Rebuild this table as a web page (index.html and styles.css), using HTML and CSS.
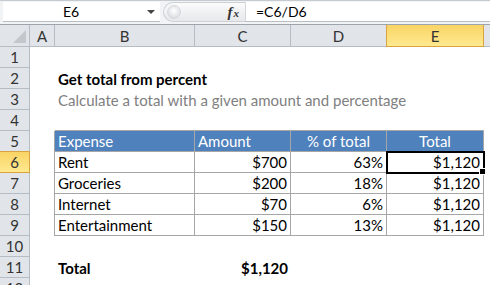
FILE: index.html
```html
<!DOCTYPE html>
<html>

<head>
    <title>Get total from percent</title>
    <link rel="stylesheet" href="styles.css">
</head>

<body>
    <div class="formula-bar">
        <div class="name-box">
            <span class="cell-ref">E6</span>
            <span class="drop"></span>
        </div>
        <div class="fx-box">
            <span class="knob"></span>
            <span class="fx"><i>f</i><i class="x">x</i></span>
        </div>
        <div class="formula">=C6/D6</div>
    </div>

    <div class="sheet">
        <div class="row head">
            <div class="corner"><span class="tri"></span></div>
            <div class="col-h">A</div>
            <div class="col-h">B</div>
            <div class="col-h">C</div>
            <div class="col-h">D</div>
            <div class="col-h active">E</div>
            <div class="col-h last"></div>
        </div>

        <div class="row">
            <div class="row-h">1</div>
            <div class="c"></div><div class="c"></div><div class="c"></div><div class="c"></div><div class="c"></div><div class="c"></div>
        </div>
        <div class="row">
            <div class="row-h">2</div>
            <div class="c"></div>
            <div class="c title">Get total from percent</div>
            <div class="c"></div><div class="c"></div><div class="c"></div><div class="c"></div>
        </div>
        <div class="row">
            <div class="row-h">3</div>
            <div class="c"></div>
            <div class="c subtitle">Calculate a total with a given amount and percentage</div>
            <div class="c"></div><div class="c"></div><div class="c"></div><div class="c"></div>
        </div>
        <div class="row">
            <div class="row-h">4</div>
            <div class="c"></div>
            <div class="c top"></div><div class="c top"></div><div class="c top"></div><div class="c top"></div>
            <div class="c"></div>
        </div>

        <div class="row">
            <div class="row-h">5</div>
            <div class="c edge"></div>
            <div class="c t th">Expense</div>
            <div class="c t th">Amount</div>
            <div class="c t th mid">% of total</div>
            <div class="c t th mid">Total</div>
            <div class="c"></div>
        </div>
        <div class="row">
            <div class="row-h active">6</div>
            <div class="c edge"></div>
            <div class="c t">Rent</div>
            <div class="c t num">$700</div>
            <div class="c t num">63%</div>
            <div class="c t num selected">$1,120<span class="handle"></span></div>
            <div class="c"></div>
        </div>
        <div class="row">
            <div class="row-h">7</div>
            <div class="c edge"></div>
            <div class="c t">Groceries</div>
            <div class="c t num">$200</div>
            <div class="c t num">18%</div>
            <div class="c t num">$1,120</div>
            <div class="c"></div>
        </div>
        <div class="row">
            <div class="row-h">8</div>
            <div class="c edge"></div>
            <div class="c t">Internet</div>
            <div class="c t num">$70</div>
            <div class="c t num">6%</div>
            <div class="c t num">$1,120</div>
            <div class="c"></div>
        </div>
        <div class="row">
            <div class="row-h">9</div>
            <div class="c edge"></div>
            <div class="c t">Entertainment</div>
            <div class="c t num">$150</div>
            <div class="c t num">13%</div>
            <div class="c t num">$1,120</div>
            <div class="c"></div>
        </div>

        <div class="row">
            <div class="row-h">10</div>
            <div class="c"></div><div class="c"></div><div class="c"></div><div class="c"></div><div class="c"></div><div class="c"></div>
        </div>
        <div class="row">
            <div class="row-h">11</div>
            <div class="c"></div>
            <div class="c bold">Total</div>
            <div class="c num bold">$1,120</div>
            <div class="c"></div><div class="c"></div><div class="c"></div>
        </div>
        <div class="row">
            <div class="row-h">12</div>
            <div class="c"></div><div class="c"></div><div class="c"></div><div class="c"></div><div class="c"></div><div class="c"></div>
        </div>
    </div>
</body>

</html>
```

FILE: styles.css
```css
body {
    margin: 0;
    font-family: Lato, "Open Sans", sans-serif;
    font-size: 15px;
    color: #000;
    background: #fff;
    overflow: hidden;
}

/* formula bar */

.formula-bar {
    display: flex;
    height: 24px;
    box-sizing: border-box;
    background: #f2f3f5;
    border-top: 1px solid #c6cbd1;
    padding-top: 1px;
}

.name-box {
    width: 157px;
    height: 20px;
    margin-left: 3px;
    box-sizing: border-box;
    background: #fff;
    border-bottom: 1px solid #b9bec5;
    display: flex;
    align-items: center;
    position: relative;
}

.cell-ref {
    flex: 1;
    text-align: center;
    font-size: 14px;
    padding-right: 8px;
}

.drop {
    width: 0;
    height: 0;
    border-left: 4px solid transparent;
    border-right: 4px solid transparent;
    border-top: 4px solid #444;
    margin-right: 5px;
}

.fx-box {
    width: 82px;
    height: 20px;
    margin-left: 3px;
    box-sizing: border-box;
    border: 1px solid #cdd1d6;
    border-right: none;
    border-radius: 10px 0 0 10px;
    background: linear-gradient(#fbfbfc, #e6e8eb);
    display: flex;
    align-items: center;
    justify-content: space-between;
    padding: 0 6px 0 3px;
}

.knob {
    width: 12px;
    height: 12px;
    border-radius: 50%;
    background: radial-gradient(circle at 50% 40%, #fff, #d0d3d8);
    border: 1px solid #d6d9dd;
}

.fx {
    font-family: "Liberation Serif", serif;
    font-size: 15px;
    color: #333;
    font-weight: bold;
}

.fx .x {
    font-size: 11px;
    margin-left: 1px;
}

.formula {
    flex: 1;
    height: 20px;
    box-sizing: border-box;
    background: #fff;
    border-bottom: 1px solid #b9bec5;
    border-left: 1px solid #d3d6da;
    padding-left: 10px;
    font-size: 14px;
    line-height: 20px;
}

/* sheet grid */

.row {
    display: grid;
    grid-template-columns: 30px 25px 140px 96px 96px 97px 1fr;
    height: 21px;
}

.row.head {
    height: 23px;
    border-top: 1px solid #9ea4ab;
    box-sizing: border-box;
}

.corner,
.col-h,
.row-h {
    background: #e1e4e8;
    color: #333;
    box-sizing: border-box;
    border-right: 1px solid #b6bcc3;
    border-bottom: 1px solid #b6bcc3;
    display: flex;
    align-items: center;
    justify-content: center;
    font-size: 15px;
}

.corner {
    position: relative;
}

.tri {
    position: absolute;
    right: 3px;
    bottom: 3px;
    width: 0;
    height: 0;
    border-left: 13px solid transparent;
    border-bottom: 13px solid #c3c7cc;
}

.col-h.last {
    border-right: none;
}

.col-h.active,
.row-h.active {
    background: linear-gradient(#f9d465, #ffe98f);
    border-color: #d9a33f;
    box-shadow: -1px 0 0 #d9a33f;
}

.row-h.active {
    box-shadow: 0 -1px 0 #d9a33f;
}

.c {
    box-sizing: border-box;
    padding: 0 3px;
    display: flex;
    align-items: flex-end;
    padding-bottom: 1px;
    white-space: nowrap;
    position: relative;
}

.c.title {
    font-weight: bold;
}

.c.subtitle {
    color: #808080;
}

.c.bold {
    font-weight: bold;
}

.c.num {
    justify-content: flex-end;
}

.c.top {
    border-bottom: 1px solid #a6a6a6;
}

.c.edge {
    border-right: 1px solid #a6a6a6;
}

.c.t {
    border-right: 1px solid #a6a6a6;
    border-bottom: 1px solid #a6a6a6;
}

.c.th {
    background: #4f81bd;
    color: #fff;
}

.c.th.mid {
    justify-content: center;
}

.c.selected {
    outline: 2px solid #000;
    outline-offset: -1px;
    z-index: 1;
}

.handle {
    position: absolute;
    right: -3px;
    bottom: -3px;
    width: 5px;
    height: 5px;
    background: #000;
    border: 1px solid #fff;
}
```
